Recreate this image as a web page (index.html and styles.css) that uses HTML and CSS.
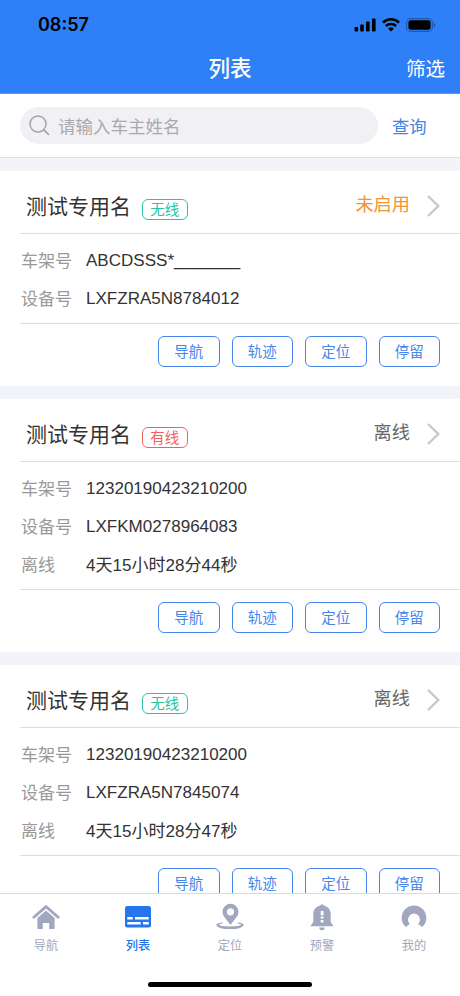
FILE: index.html
```html
<!DOCTYPE html>
<html lang="zh-CN">
<head>
    <meta charset="UTF-8">
    <meta name="viewport" content="width=device-width, initial-scale=1.0">
    <title>列表</title>
    <link rel="stylesheet" href="styles.css">
</head>
<body>
    <div class="app">
        <header class="header">
            <div class="status-bar">
                <span class="time">08:57</span>
                <div class="status-icons">
                    <svg width="22" height="14" viewBox="0 0 22 14">
                        <rect x="0.5" y="9" width="3.6" height="4.5" rx="1"/>
                        <rect x="6.2" y="6.5" width="3.6" height="7" rx="1"/>
                        <rect x="12" y="3.5" width="3.6" height="10" rx="1"/>
                        <rect x="18" y="0.5" width="3.6" height="13" rx="1"/>
                    </svg>
                    <svg width="18" height="14" viewBox="0 0 18 14">
                        <path d="M1 4.6a11.5 11.5 0 0 1 16 0M3.9 8a7.3 7.3 0 0 1 10.2 0" fill="none" stroke="#000" stroke-width="2.5"/>
                        <path d="M9 13.6l-2.9-2.9a4.1 4.1 0 0 1 5.8 0z"/>
                    </svg>
                    <svg width="30" height="14" viewBox="0 0 30 14">
                        <rect x="0.6" y="0.6" width="25.8" height="12.8" rx="4" fill="none" stroke="#1f58ae" stroke-width="1.1"/>
                        <rect x="2.4" y="2.3" width="22.2" height="9.4" rx="2.2"/>
                        <path d="M27.8 4.8a2.3 2.3 0 0 1 0 4.4z" fill="#1f58ae"/>
                    </svg>
                </div>
            </div>
            <div class="title-bar">
                <h1>列表</h1>
                <a class="filter">筛选</a>
            </div>
        </header>

        <div class="search-bar">
            <div class="search-box">
                <svg width="21" height="21" viewBox="0 0 21 21">
                    <circle cx="9" cy="9" r="8" fill="none" stroke="#a3a3a8" stroke-width="1.5"/>
                    <path d="M14.8 14.8l5.2 5" stroke="#a3a3a8" stroke-width="1.7"/>
                </svg>
                <span>请输入车主姓名</span>
            </div>
            <a class="query">查询</a>
        </div>

        <main class="list">
            <section class="card">
                <div class="card-head">
                    <h2>测试专用名</h2>
                    <span class="tag wireless">无线</span>
                    <span class="state disabled">未启用</span>
                    <svg class="arrow" width="13" height="22" viewBox="0 0 13 22"><path d="M1 1l10.3 10L1 21"/></svg>
                </div>
                <div class="rows">
                    <div class="row"><label>车架号</label><span>ABCDSSS*_______</span></div>
                    <div class="row"><label>设备号</label><span>LXFZRA5N8784012</span></div>
                </div>
                <div class="actions">
                    <button>导航</button>
                    <button>轨迹</button>
                    <button>定位</button>
                    <button>停留</button>
                </div>
            </section>

            <section class="card">
                <div class="card-head">
                    <h2>测试专用名</h2>
                    <span class="tag wired">有线</span>
                    <span class="state">离线</span>
                    <svg class="arrow" width="13" height="22" viewBox="0 0 13 22"><path d="M1 1l10.3 10L1 21"/></svg>
                </div>
                <div class="rows">
                    <div class="row"><label>车架号</label><span>12320190423210200</span></div>
                    <div class="row"><label>设备号</label><span>LXFKM0278964083</span></div>
                    <div class="row duration"><label>离线</label><span>4天15小时28分44秒</span></div>
                </div>
                <div class="actions">
                    <button>导航</button>
                    <button>轨迹</button>
                    <button>定位</button>
                    <button>停留</button>
                </div>
            </section>

            <section class="card">
                <div class="card-head">
                    <h2>测试专用名</h2>
                    <span class="tag wireless">无线</span>
                    <span class="state">离线</span>
                    <svg class="arrow" width="13" height="22" viewBox="0 0 13 22"><path d="M1 1l10.3 10L1 21"/></svg>
                </div>
                <div class="rows">
                    <div class="row"><label>车架号</label><span>12320190423210200</span></div>
                    <div class="row"><label>设备号</label><span>LXFZRA5N7845074</span></div>
                    <div class="row duration"><label>离线</label><span>4天15小时28分47秒</span></div>
                </div>
                <div class="actions">
                    <button>导航</button>
                    <button>轨迹</button>
                    <button>定位</button>
                    <button>停留</button>
                </div>
            </section>
        </main>

        <footer class="footer">
            <nav class="tabs">
                <a class="tab">
                    <svg width="28" height="28" viewBox="0 0 28 28">
                        <path d="M1.8 14.2L14 3.6l12.2 10.6" fill="none" stroke="currentColor" stroke-width="2.8" stroke-linecap="round" stroke-linejoin="round"/>
                        <path d="M14 7.600l8.600 7.500V25a1 1 0 0 1-1 1h-4.400v-6.100h-6.400V26H6.400a1 1 0 0 1-1-1v-9.900z"/>
                    </svg>
                    <span>导航</span>
                </a>
                <a class="tab active">
                    <svg width="28" height="28" viewBox="0 0 28 28">
                        <rect x="1" y="3" width="26" height="21.5" rx="2.2"/>
                        <path d="M3.300 14h5.500v2.500H3.300zM11 14h13.700v2.500H11zM3.300 19h13.400v2.500H3.300zM19 19h5.700v2.500H19z" fill="#fff"/>
                    </svg>
                    <span>列表</span>
                </a>
                <a class="tab">
                    <svg width="28" height="28" viewBox="0 0 28 28">
                        <path fill-rule="evenodd" d="M14.500 .8A8 8 0 0 1 22.500 8.800c0 4.800-4.200 7.600-8 13.200-3.800-5.600-8-8.400-8-13.200a8 8 0 0 1 8-8zm0 4.400a3.600 3.600 0 1 0 0 7.200 3.600 3.600 0 0 0 0-7.200z"/>
                        <path d="M1.600 21.900c2 3.900 22.800 3.900 24.800 0" fill="none" stroke="currentColor" stroke-width="2.500" stroke-linecap="round"/>
                        <path d="M1.800 21.700c.6-.8 2.200-1.500 4.400-1.800M26.200 21.700c-.6-.8-2.200-1.500-4.400-1.800" fill="none" stroke="currentColor" stroke-width="1.200"/>
                    </svg>
                    <span>定位</span>
                </a>
                <a class="tab">
                    <svg width="28" height="28" viewBox="0 0 28 28">
                        <path d="M12.4 2.500a1.700 1.700 0 0 1 3.200 0c4.600 1 7.100 4.300 7.100 8.500v8l3 4.300H2.300l3-4.300v-8c0-4.200 2.500-7.500 7.100-8.500zM11.300 24.600h5.400a2.700 2.700 0 0 1-5.400 0z"/>
                        <path d="M12.700 8h2.800v4.200h-2.800zM12.700 13.600h2.800v2h-2.800zM12.700 17h2.800v2.500h-2.800z" fill="#fff"/>
                    </svg>
                    <span>预警</span>
                </a>
                <a class="tab">
                    <svg width="28" height="28" viewBox="0 0 28 28">
                        <path d="M5.900 24.100a12.300 12.300 0 1 1 16.200 0l-3.900-3.200a6 6 0 1 0-8.400 0z"/>
                    </svg>
                    <span>我的</span>
                </a>
            </nav>
            <div class="home-indicator"></div>
        </footer>
    </div>
</body>
</html>
```
FILE: styles.css
```css
* {
    box-sizing: border-box;
}

body {
    margin: 0;
    font-family: "Liberation Sans", "Noto Sans CJK SC", sans-serif;
    color: #333;
    background: #f3f4f9;
}

.app {
    display: flex;
    flex-direction: column;
    height: 996px;
    overflow: hidden;
}

/* header */
.header {
    flex: none;
    height: 94px;
    background: #2f7ff6;
    border-bottom: 1px solid #5b9cf8;
}

.status-bar {
    display: flex;
    justify-content: space-between;
    height: 42px;
    padding: 14px 24px 0 38px;
}

.time {
    font-family: Inter, sans-serif;
    font-size: 18px;
    font-weight: 600;
    line-height: 22px;
    color: #000;
}

.status-icons {
    display: flex;
    gap: 6px;
    padding-top: 4px;
}

.title-bar {
    display: grid;
    grid-template-columns: 1fr auto 1fr;
    align-items: center;
    height: 53px;
    padding: 0 15px;
    color: #fff;
}

.title-bar h1 {
    grid-column: 2;
    margin: 0;
    font-size: 21.5px;
    font-weight: 500;
    line-height: 30px;
}

.filter {
    justify-self: end;
    font-size: 19.5px;
    line-height: 30px;
}

/* search */
.search-bar {
    display: flex;
    flex: none;
    align-items: center;
    height: 64px;
    padding-left: 20px;
    background: #fff;
    border-bottom: 1px solid #dedfe3;
}

.search-box {
    display: flex;
    flex: none;
    align-items: center;
    gap: 8px;
    width: 358px;
    height: 37px;
    padding-left: 9px;
    border-radius: 19px;
    background: #f1f1f5;
    font-size: 17.5px;
    color: #a9a9ad;
}

.search-box span {
    padding-bottom: 1px;
}

.query {
    margin-left: 14px;
    padding-bottom: 1px;
    font-size: 17.3px;
    white-space: nowrap;
    color: #4483e8;
}

/* cards */
.list {
    flex: 1;
    min-height: 0;
    padding-top: 13px;
    overflow: hidden;
}

.card {
    margin-bottom: 13px;
    padding-left: 20px;
    background: #fff;
}

.card-head {
    display: flex;
    align-items: center;
    height: 63px;
    padding: 9px 20px 0 6px;
    border-bottom: 1px solid #dcdcdc;
}

.card-head h2 {
    margin: 0;
    font-size: 21px;
    font-weight: 400;
    line-height: 30px;
}

.tag {
    width: 45.5px;
    height: 21px;
    margin: 5px 0 0 11px;
    border: 1px solid;
    border-radius: 6px;
    font-size: 14.5px;
    line-height: 20px;
    text-align: center;
}

.wireless {
    color: #2cc3a0;
}

.wired {
    color: #f2635c;
}

.state {
    margin: -8px 17px 0 auto;
    font-size: 18.2px;
    color: #666;
}

.disabled {
    color: #f29432;
}

.arrow {
    margin-top: -1px;
    fill: none;
    stroke: #c7c7cc;
    stroke-width: 2.4;
}

.rows {
    padding: 7px 0 6px;
    border-bottom: 1px solid #dcdcdc;
}

.row {
    display: flex;
    align-items: center;
    height: 38px;
    font-size: 17.05px;
}

.row label {
    width: 66px;
    padding: 0 0 2px 1px;
    color: #999;
}

.row span {
    padding-top: 1px;
}

.duration span {
    padding: 0 0 2px;
}

.actions {
    display: flex;
    justify-content: flex-end;
    gap: 12px;
    height: 62px;
    padding: 12px 20px 0 0;
}

.actions button {
    width: 61.5px;
    height: 31px;
    padding: 0 0 2px;
    border: 1px solid #4585ec;
    border-radius: 6px;
    background: #fff;
    font-family: inherit;
    font-size: 14.5px;
    color: #4585ec;
}

/* bottom tabs */
.footer {
    flex: none;
    height: 103px;
    background: #fff;
    border-top: 1px solid #d9dbe0;
}

.tabs {
    display: flex;
    height: 89px;
}

.tab {
    display: flex;
    flex: 1;
    flex-direction: column;
    align-items: center;
    gap: 5px;
    padding-top: 9px;
    font-size: 12.2px;
    line-height: 20px;
    color: #a0a7be;
}

.tab svg {
    fill: currentColor;
}

.active {
    color: #2476ec;
    font-weight: 500;
}

.home-indicator {
    width: 164px;
    height: 5px;
    margin: -1px auto 0;
    border-radius: 3px;
    background: #000;
}
```
